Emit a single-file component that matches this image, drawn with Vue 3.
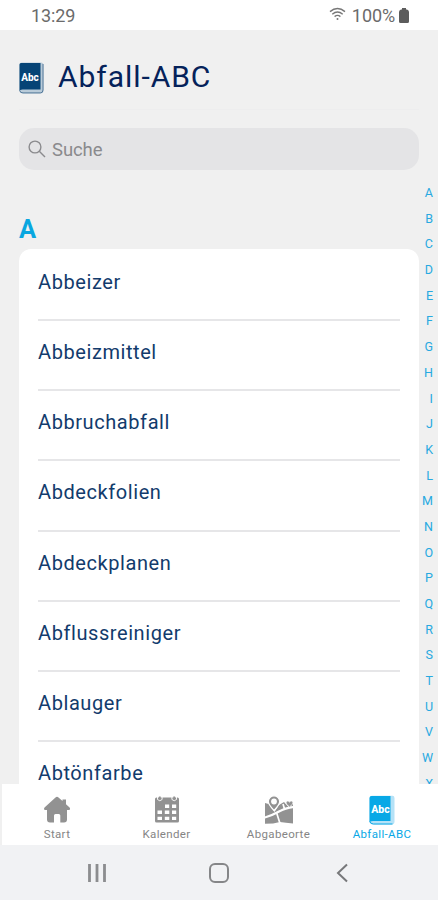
<script setup>
import {ref} from "vue";

const items = [
  'Abbeizer',
  'Abbeizmittel',
  'Abbruchabfall',
  'Abdeckfolien',
  'Abdeckplanen',
  'Abflussreiniger',
  'Ablauger',
  'Abtönfarbe',
];
const letters = 'ABCDEFGHIJKLMNOPQRSTUVWX'.split('');
const tabs = [
  {id: 'start', text: 'Start'},
  {id: 'kalender', text: 'Kalender'},
  {id: 'orte', text: 'Abgabeorte'},
  {id: 'abc', text: 'Abfall-ABC'},
];
const active = ref('abc');
const search = ref('');
</script>

<template>
  <div class="app">
    <div class="status">
      <span class="status__time">13:29</span>
      <svg class="status__wifi" width="17" height="14" viewBox="0 0 17 14" fill="none" stroke="#777" stroke-width="1.4">
        <path d="M1 4.600Q8.500-1.600 16 4.600M3.300 7.200Q8.500 2.800 13.700 7.200M5.600 9.600Q8.500 7.200 11.400 9.600"/>
        <circle cx="8.500" cy="12" r="1" fill="#777" stroke="none"/>
      </svg>
      <span class="status__percent">100%</span>
      <svg width="10" height="15" viewBox="0 0 10 15" fill="#5c5c5c">
        <path d="M3 0h4v1.500h1Q10 2 10 4v9.500Q10 15 8.500 15h-7Q0 15 0 13.500V4Q0 2 2 1.500h1z"/>
      </svg>
    </div>

    <div class="content">
      <div class="main">
        <div class="header">
          <svg width="25" height="32" viewBox="0 0 25 32">
            <path d="M3 .5h19q2.500 0 2.500 2.500v25.500q0 3-3 3H4q-3.500 0-3.500-3.500V3Q.5.500 3 .5z" fill="#b9cbd9"/>
            <path d="M2 1h19.500v26.500H3.500Q.5 27.500 .5 29.500V2.500Q.5 1 2 1z" fill="#064476"/>
            <path d="M24 2v26q0 2.900-2.700 2.900H4q-3 0-3.200-2.400" fill="none" stroke="#54799a" stroke-width="1"/>
            <text x="11" y="18.500" text-anchor="middle" class="book-text" font-size="10">Abc</text>
          </svg>
          <h1 class="title">Abfall-ABC</h1>
        </div>
        <label class="search">
          <svg width="18" height="18" viewBox="0 0 18 18" fill="none" stroke="#8b8b8e" stroke-width="1.400">
            <circle cx="7" cy="7" r="5.900"/>
            <path d="M11.300 11.300L17 17"/>
          </svg>
          <input v-model="search" class="search__input" placeholder="Suche">
        </label>
        <div class="section">A</div>
        <div class="list">
          <div v-for="item in items" :key="item" class="row">{{ item }}</div>
        </div>
      </div>
      <div class="index">
        <div v-for="letter in letters" :key="letter" class="index__letter">{{ letter }}</div>
      </div>
    </div>

    <div class="tabs">
      <div v-for="tab in tabs" :key="tab.id" class="tab" :class="['tab_' + tab.id, {tab_active: active === tab.id}]"
           @click="active = tab.id">
        <svg v-if="tab.id === 'start'" class="tab__icon" width="26" height="30" viewBox="0 0 26 30" fill="#929292">
          <path d="M11.500 2.500q1.500-1.300 3 0l4 3.500V4.500h3.500v4.700l3.300 3q1.100 1.200.6 2.200-.5.600-1.800.6H23v9.500q0 3-3 3h-3.700V20.500q0-1.500-1.500-1.500h-3.300q-1.500 0-1.500 1.500v7H6q-3 0-3-3V15H2Q.5 15 .2 14.400q-.5-1 .6-2.200z"/>
        </svg>
        <svg v-else-if="tab.id === 'kalender'" class="tab__icon" width="26" height="30" viewBox="0 0 26 30">
          <path d="M1 4q0-1.500 1.500-1.500h21Q25 2.500 25 4v22q0 1.500-1.500 1.500h-21Q1 27.500 1 26z" fill="#929292"/>
          <path d="M11 9.500h4.200v3.500h-4.200zM18 9.500h4.200v3.500h-4.200zM3.500 15.500h4.500v3.500H3.500zM10.800 15.500h4.500v3.500h-4.500zM18 15.500h4.200v3.500h-4.200zM3.500 21.800h4.500v3.300H3.500zM10.800 21.800h4.500v3.300h-4.500zM18 21.800h4.200v3.300h-4.200z" fill="#fff"/>
          <path d="M3.500 2v2.500q2.300 2.500 4.600 0V2M17.900 2v2.500q2.300 2.500 4.600 0V2" fill="none" stroke="#fff" stroke-width=".9"/>
          <path d="M5.800 1.500v2.700M20.200 1.500v2.700" stroke="#929292" stroke-width="1.800"/>
        </svg>
        <svg v-else-if="tab.id === 'orte'" class="tab__icon" width="30" height="30" viewBox="0 0 30 30">
          <path d="M1 8q3 1 4.500 1l5 8 4.500-7 5-3 4.500 5 3.500-4h1V28.500l-7-.7-6-.8-7 1.500-8 .2z" fill="#929292"/>
          <path d="M0 22.800Q9 20 15 16.500T30 11.800" fill="none" stroke="#fff" stroke-width="2.200"/>
          <path d="M12.500 17.500l3.500 11M19 9l1.500 5" fill="none" stroke="#fff" stroke-width="1.700"/>
          <path d="M10 15.500Q4.300 9.500 4.300 6.500a5.700 5.700 0 0 1 11.400 0Q15.700 9.500 10 15.500z" fill="#929292" stroke="#fff" stroke-width="1.200"/>
          <circle cx="10" cy="6.500" r="2.900" fill="#fff"/>
          <path d="M25.500 12L22.300 9q-1.200-3 1.300-3 1.200 0 1.900 1 .7-1 1.900-1 2.500 0 1.300 3z" fill="#929292" stroke="#fff" stroke-width=".8"/>
        </svg>
        <svg v-else class="tab__icon" width="26" height="30" viewBox="0 0 26 30">
          <path d="M3 .8h20.500Q25.500.8 25.500 3v23.500q0 3-3 3H4q-3.500 0-3.500-3.500V3Q.5.800 3 .8z" fill="#b5e2f7"/>
          <path d="M2.500 1H21.500v25H4q-3.500 0-3.500 2V3q0-2 2-2z" fill="#08a8e6"/>
          <path d="M1 26.500q.5 2.500 3.500 2.500h19" fill="none" stroke="#08a8e6" stroke-width="1"/>
          <text x="11.500" y="17.700" text-anchor="middle" class="book-text" font-size="10.500">Abc</text>
        </svg>
        <div class="tab__text">{{ tab.text }}</div>
      </div>
    </div>

    <div class="system">
      <svg width="20" height="20" viewBox="0 0 20 20" stroke="#8c8d8f" stroke-width="2.800">
        <path d="M2.500 1v18M10 1v18M17.500 1v18"/>
      </svg>
      <svg class="system__home" width="20" height="20" viewBox="0 0 20 20" fill="none" stroke="#858688" stroke-width="2">
        <rect x="1" y="1" width="18" height="18" rx="5"/>
      </svg>
      <svg width="12" height="20" viewBox="0 0 12 20" fill="none" stroke="#77787a" stroke-width="2">
        <path d="M11 1.500L2 10l9 8.500"/>
      </svg>
    </div>
  </div>
</template>

<style>
body {
  margin: 0;
  overflow: hidden;
}
</style>

<style scoped>
.app {
  width: 438px;
  height: 900px;
  display: flex;
  flex-direction: column;
  overflow: hidden;
  background-color: #f0f0f0;
  font-family: Roboto, "Liberation Sans", sans-serif;
}
.status {
  height: 30px;
  flex: none;
  box-sizing: border-box;
  padding: 1px 29px 0 31px;
  display: flex;
  align-items: center;
  background-color: #fff;
  color: #6b6b6b;
  font-size: 18px;
}
.status__time {
  flex: 1;
  letter-spacing: -0.1px;
}
.status__wifi {
  margin: 0 6px 3px 0;
}
.status__percent {
  margin-right: 4px;
  letter-spacing: -0.1px;
}
.content {
  flex: 1;
  min-height: 0;
  display: flex;
  overflow: hidden;
}
.main {
  width: 400px;
  margin-left: 19px;
  flex: none;
}
.header {
  height: 79px;
  display: flex;
  align-items: center;
  gap: 14px;
  border-bottom: 1px solid #ededee;
}
.header svg {
  margin-top: 16px;
}
.title {
  margin: 14px 0 0;
  color: #05225a;
  font-size: 30px;
  font-weight: 400;
  letter-spacing: 0.95px;
}
.book-text {
  fill: #fff;
  font-weight: 800;
}
.search {
  height: 42px;
  margin-top: 18px;
  box-sizing: border-box;
  padding: 0 9px;
  display: flex;
  align-items: center;
  gap: 6px;
  border-radius: 15px;
  background-color: #e4e4e6;
}
.search__input {
  flex: 1;
  border: none;
  outline: none;
  padding: 1px 0 0;
  background: none;
  font: inherit;
  font-size: 18.5px;
  letter-spacing: -0.1px;
}
.search__input::placeholder {
  color: #8a8a8d;
}
.section {
  height: 79px;
  box-sizing: border-box;
  padding-top: 44px;
  color: #09a7e0;
  font-size: 25.5px;
  line-height: 30px;
  font-weight: 700;
}
.list {
  box-sizing: border-box;
  padding: 1.8px 19px 0;
  border-radius: 12px 12px 0 0;
  background-color: #fff;
}
.row {
  height: 70.2px;
  box-sizing: border-box;
  padding-top: 19px;
  border-bottom: 2px solid #e6e6e8;
  color: #123b6c;
  font-size: 20px;
  line-height: 24px;
  letter-spacing: 0.58px;
}
.index {
  flex: 1;
  padding: 150px 5px 0 0;
  text-align: right;
}
.index__letter {
  height: 25.7px;
  color: #27a9e1;
  font-size: 12.5px;
  line-height: 26px;
}
.tabs {
  height: 61px;
  flex: none;
  display: flex;
  margin-left: 2px;
  background-color: #fff;
}
.tab {
  display: flex;
  flex-direction: column;
  align-items: center;
  color: #858585;
  font-size: 11.5px;
  cursor: pointer;
}
.tab_start {
  width: 110px;
}
.tab_kalender {
  width: 109px;
}
.tab_orte {
  width: 115px;
}
.tab_abc {
  width: 92px;
}
.tab__icon {
  margin-top: 11px;
}
.tab__text {
  margin-top: 2px;
  line-height: 15px;
  letter-spacing: 0.35px;
}
.tab_active {
  color: #08a8e6;
}
.system {
  height: 55px;
  flex: none;
  box-sizing: border-box;
  padding: 0 90px 0 87px;
  display: flex;
  align-items: center;
  justify-content: space-between;
  background-color: #f1f2f4;
}
.system__home {
  margin-right: 5px;
}
</style>
